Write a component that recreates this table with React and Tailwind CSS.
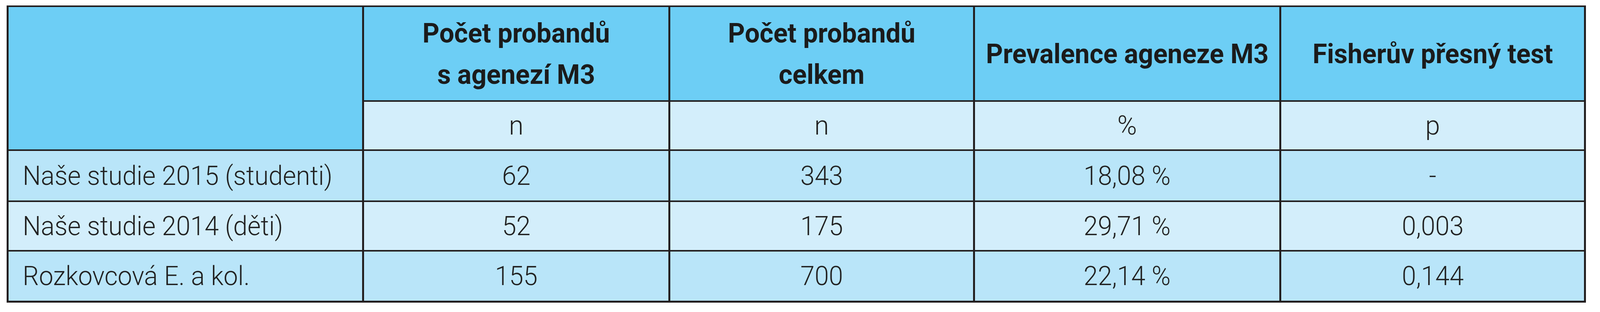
const head = 'bg-[#6dcef5] flex items-center justify-center text-center font-bold text-[71px] leading-[106px] text-[#1b1b1b]';
const sub = 'bg-[#d3eefb] flex items-center justify-center text-[68px] font-light text-[#222]';

const rows = [
  { label: 'Naše studie 2015 (studenti)', vals: ['62', '343', '18,08 %', '-'], bg: 'bg-[#b9e5f9]' },
  { label: 'Naše studie 2014 (děti)', vals: ['52', '175', '29,71 %', '0,003'], bg: 'bg-[#d3eefb]' },
  { label: 'Rozkovcová E. a kol.', vals: ['155', '700', '22,14 %', '0,144'], bg: 'bg-[#b9e5f9]' },
];

const Head = ({ children }) => (
  <div className={head}>
    <span className="inline-block scale-x-95 whitespace-nowrap">{children}</span>
  </div>
);

export default function App() {
  return (
    <div className="w-full h-[800px] bg-white pt-[14px] pl-[17px]" style={{ fontFamily: 'Roboto, "Liberation Sans", sans-serif' }}>
      <div className="inline-grid grid-cols-[905px_779px_775px_779px_775px] grid-rows-[239px_122px_127px_123px_126px] gap-x-[5px] gap-y-[4px] px-[5px] pt-[4px] pb-[5px] bg-[#231f20]">
        <div className="bg-[#6dcef5] row-span-2" />
        <Head>Počet probandů<br />s agenezí M3</Head>
        <Head>Počet probandů<br />celkem</Head>
        <Head>Prevalence ageneze M3</Head>
        <Head>Fisherův přesný test</Head>
        <div className={sub}>n</div>
        <div className={sub}>n</div>
        <div className={sub}>%</div>
        <div className={sub}>p</div>
        {rows.map(r => (
          <div key={r.label} className="contents">
            <div className={`${r.bg} flex items-center pl-[36px] text-[68px] font-light text-[#222] whitespace-nowrap`}>
              <span className="inline-block origin-left scale-x-[0.965]">{r.label}</span>
            </div>
            {r.vals.map((v, i) => (
              <div key={i} className={`${r.bg} flex items-center justify-center text-[68px] font-light text-[#222]`}>
                <span className="inline-block scale-x-[0.965]">{v}</span>
              </div>
            ))}
          </div>
        ))}
      </div>
    </div>
  );
}
